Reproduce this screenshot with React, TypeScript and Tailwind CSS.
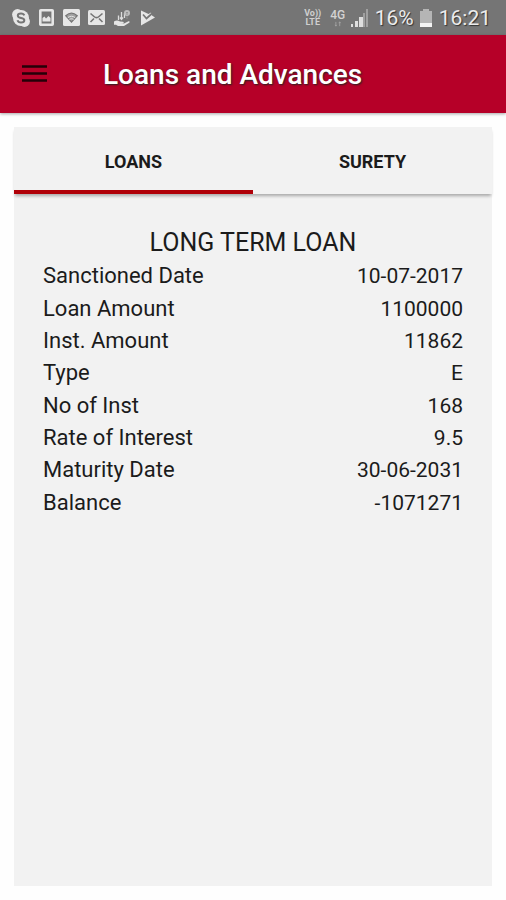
import React, { useState } from 'react';

interface LoanField {
  label: string;
  value: string;
}

const loanFields: LoanField[] = [
  { label: 'Sanctioned Date', value: '10-07-2017' },
  { label: 'Loan Amount', value: '1100000' },
  { label: 'Inst. Amount', value: '11862' },
  { label: 'Type', value: 'E' },
  { label: 'No of Inst', value: '168' },
  { label: 'Rate of Interest', value: '9.5' },
  { label: 'Maturity Date', value: '30-06-2031' },
  { label: 'Balance', value: '-1071271' },
];

const tabs = ['LOANS', 'SURETY'];

const StatusBar: React.FC = () => (
  <div className="flex h-[35px] items-center justify-between bg-[#757575] pl-3 pr-[15px] text-[#ececec]">
    <div className="flex items-center gap-[7px]">
      <svg className="h-[18px] w-[18px]" viewBox="0 0 18 18" fill="none">
        <circle cx="9" cy="9" r="8" fill="#e6e6e6" />
        <circle cx="5.5" cy="5.5" r="5.4" fill="#e6e6e6" />
        <circle cx="12.5" cy="12.5" r="5.4" fill="#e6e6e6" />
        <path d="M12.300 6.400C11.800 5 10.600 4.500 9 4.500c-1.900 0-3.200.8-3.200 2.200 0 3.200 6.500 1.400 6.500 4.500 0 1.500-1.400 2.300-3.300 2.300-1.800 0-3-.7-3.500-2.200" stroke="#757575" strokeWidth="2" />
      </svg>
      <svg className="ml-[2px] h-[17px] w-[15px]" viewBox="0 0 15 17" fill="none">
        <rect x="1.300" y="1.300" width="12.400" height="14.400" rx="0.500" stroke="#e6e6e6" strokeWidth="2.600" />
        <path d="M3.500 12.500V9l2-1.500 1.500 2L9.500 7l2 2v3.500z" fill="#e6e6e6" />
      </svg>
      <svg className="ml-[2px] h-[17px] w-[17px]" viewBox="0 0 17 17" fill="none">
        <rect width="17" height="17" rx="1.500" fill="#e6e6e6" />
        <path d="M2.800 6.800c3.500-3.200 7.900-3.200 11.400 0L8.500 13z" fill="#a0a0a0" stroke="#757575" strokeWidth="1.200" />
        <path d="M4.800 8.600c2.400-1.800 5-1.800 7.400 0M6.500 10.500c1.300-1 2.700-1 4 0" stroke="#e6e6e6" />
      </svg>
      <svg className="ml-[1px] h-[15px] w-[17px]" viewBox="0 0 17 15" fill="none">
        <rect width="17" height="15" rx="1.500" fill="#e6e6e6" />
        <path d="M2.500 3.500l3.500 3c1.500 1.300 3.500 1.300 5 0l3.500-3M2.500 12L6 8.500M14.500 12L11 8.500" stroke="#757575" strokeWidth="1.600" />
      </svg>
      <svg className="ml-[1px] h-[18px] w-[18px]" viewBox="0 0 18 18" fill="none">
        <path d="M1 12.500c2-1.500 4-1.500 6 0l3 .3c1 .2 1 1.400 0 1.500H7l4 .3 4.500-2.300c1.200-.3 1.600.8.7 1.500L11 17H5l-2-1.200H1z" fill="#e6e6e6" />
        <path d="M5.500 6.500V11M8.500 3v7.500M7 8.500l1.500 2 1.500-2M11.500 4v5" stroke="#dcdcdc" strokeWidth="1.300" />
        <circle cx="14" cy="4" r="3" fill="#bdbdbd" />
        <path d="M14 7v3M13 3.500h2M13 5h2" stroke="#929292" />
      </svg>
      <svg className="ml-[2px] h-[18px] w-[15px]" viewBox="0 0 15 18" fill="none">
        <path d="M1 1.500l7.500 3.500L11 3.500l1 3L15 8.500 1 16.500z" fill="#e6e6e6" />
        <path d="M3 5.500L6.500 9.500 12 4.500" stroke="#757575" strokeWidth="1.700" />
      </svg>
    </div>

    <div className="flex items-center">
      <div className="flex w-[18px] flex-col items-center text-[9px] font-bold leading-3 text-[#cfcfcf]">
        <span className="h-[9px] leading-[9px]">Vo))</span>
        <span className="h-[9px] leading-[9px]">LTE</span>
      </div>
      <div className="ml-2 flex w-4 flex-col items-center text-[#d2d2d2]">
        <span className="text-[12px] font-medium leading-[12px]">4G</span>
        <svg className="h-[6px] w-2" viewBox="0 0 8 7" stroke="#a5a5a5" fill="none">
          <path d="M1.500 1v5M.5 4.500l1 1.500 1-1.500M6 6V1M5 2.500L6 1l1 1.500" />
        </svg>
      </div>
      <svg className="ml-[5px] h-[18px] w-[17px]" viewBox="0 0 17 18">
        <path d="M0 15h2v3H0zM4 12h3v6H4zM8 8h4v10H8z" fill="#dedede" />
        <path d="M12 4h2v14h-2zM15 0h2v18h-2z" fill="#a0a0a0" />
      </svg>
      <span className="ml-[7px] text-[21px] leading-6 [text-shadow:1px_1px_1px_#333]">16%</span>
      <svg className="ml-[6px] h-[18px] w-3" viewBox="0 0 12 18">
        <path d="M3 0h6v2h3v12H0V2h3z" fill="#b5b5b5" />
        <path d="M0 14h12v4H0z" fill="#f4f4f4" />
      </svg>
      <span className="ml-[7px] text-[21px] leading-6 [text-shadow:1px_1px_1px_#333]">16:21</span>
    </div>
  </div>
);

const App: React.FC = () => {
  const [activeTab, setActiveTab] = useState('LOANS');

  return (
    <div className="flex min-h-screen flex-col bg-[#fefefe] font-['Roboto',sans-serif] text-[#1b1b1b]">
      <StatusBar />

      <header className="flex h-[78px] items-center bg-[#b60028] pl-[22px] shadow-[0_1px_3px_rgba(0,0,0,0.35)]">
        <button type="button" aria-label="Open menu" className="text-[#250008]">
          <svg className="h-[18px] w-[25px]" viewBox="0 0 25 18" fill="currentColor">
            <path d="M0 .2h25v2.600H0zM0 7.200h25v2.600H0zM0 14.200h25v2.600H0z" />
          </svg>
        </button>
        <h1 className="ml-[56px] pt-[2px] text-[28px] font-medium leading-8 text-white [text-shadow:1px_1px_2px_#222]">
          Loans and Advances
        </h1>
      </header>

      <main className="m-[14px] flex flex-1 flex-col bg-[#f2f2f2]">
        <div role="tablist" className="flex h-[67px] shadow-[0_3px_3px_-1px_rgba(0,0,0,0.3)]">
          {tabs.map((tab) => (
            <button
              key={tab}
              type="button"
              role="tab"
              aria-selected={activeTab === tab}
              onClick={() => setActiveTab(tab)}
              className={`flex-1 border-b-4 pt-[6px] text-[18px] font-bold leading-6 ${
                activeTab === tab ? 'border-[#b00008]' : 'border-transparent'
              }`}
            >
              {tab}
            </button>
          ))}
        </div>

        {activeTab === 'LOANS' && (
          <section className="px-[29px] pt-[33px]">
            <h2 className="text-center text-[25px] leading-8">LONG TERM LOAN</h2>
            <table className="mt-px h-[259px] w-full text-[22px] leading-8">
              <tbody>
                {loanFields.map((field) => (
                  <tr key={field.label}>
                    <th scope="row" className="p-0 text-left font-normal">{field.label}</th>
                    <td className="p-0 text-right text-[21px]">{field.value}</td>
                  </tr>
                ))}
              </tbody>
            </table>
          </section>
        )}
      </main>
    </div>
  );
};

export default App;
